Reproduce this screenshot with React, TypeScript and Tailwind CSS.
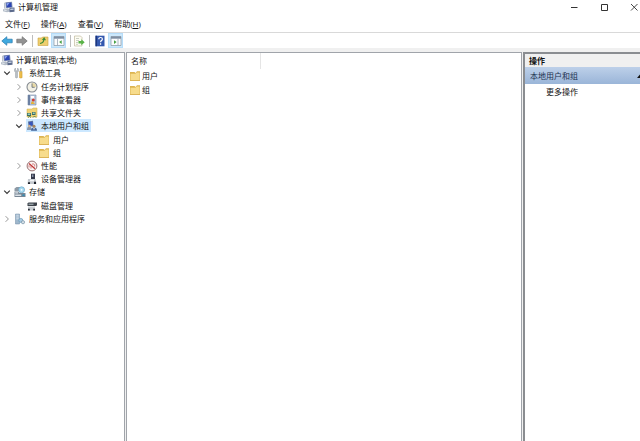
import type { ReactNode } from "react";
import clsx from "clsx";

interface TreeItem {
  label: string;
  icon: ReactNode;
  state?: "open" | "closed";
  selected?: boolean;
  children?: TreeItem[];
}

function Computer() {
  return (
    <svg className="h-3 w-3 shrink-0" viewBox="0 0 12 12">
      <path d="M1 2l1.500-.8v6.600L1 7.500z" fill="#b9c1cc" />
      <path d="M2.500 1.300L9 .8l.6 5.700-6.600.6z" fill="#8593b0" />
      <path d="M3.300 2l5-.4.400 4.300-5 .5z" fill="#2c45b4" />
      <path d="M3.500 2.200l3-.2-2.500 3z" fill="#8ea6ee" />
      <path d="M0 8.300l4.500-1 3 1.200v2L4 11.300 0 10.200z" fill="#b3bcc8" />
      <path d="M.8 8.900l2.700.6" stroke="#f3f6f9" strokeWidth=".8" />
      <path d="M6.500 6.800L11.500 6.500v4.200l-5 .6z" fill="#5c6b8c" />
      <path d="M7.300 7.700l3.300-.2v1.300l-3.300.3z" fill="#cbd6ea" />
    </svg>
  );
}

function Tools() {
  return (
    <svg className="h-3 w-3 shrink-0" viewBox="0 0 12 12">
      <path d="M1.500 1v2l1 .8 1-.8V1l1 1v2.200l-1 1v5.300q-1 1-2 0V5.200l-1-1V2z" fill="#b9bfc5" stroke="#878e95" strokeWidth=".4" />
      <path d="M6 1h1.600l.2 3.500h-2z" fill="#9ca3aa" />
      <path d="M5.500 4.500h2.600v6.200q-1.300.8-2.600 0z" fill="#edbe4b" stroke="#c08d20" strokeWidth=".4" />
    </svg>
  );
}

function Clock() {
  return (
    <svg className="h-3 w-3 shrink-0" viewBox="0 0 12 12">
      <circle cx="6" cy="6" r="5" fill="#f3f1e6" stroke="#858b91" strokeWidth="1.100" />
      <path d="M6 6V2a4 4 0 0 1 4 4z" fill="#e8d9a6" />
      <path d="M6 2.500V6.300h2.700" fill="none" stroke="#5c6670" strokeWidth=".8" />
    </svg>
  );
}

function EventLog() {
  return (
    <svg className="h-3 w-3 shrink-0" viewBox="0 0 12 12">
      <path d="M2 1h8v10H2z" fill="#bccbe0" stroke="#7486a2" strokeWidth=".6" />
      <path d="M2 1h2v10H2z" fill="#6c80a2" />
      <path d="M5 2h3v2.500H5z" fill="#fff" />
      <circle cx="7.300" cy="6" r="1.500" fill="#cf3b36" />
      <path d="M5 8.500L6.500 7 9 10H5z" fill="#e4b23a" />
    </svg>
  );
}

function SharedFolder() {
  return (
    <svg className="h-3 w-3 shrink-0" viewBox="0 0 12 12">
      <path d="M1 2h5l1-1h4v9H1z" fill="#f0d274" stroke="#d2ac49" strokeWidth=".5" />
      <path d="M1 6h4v3H1zM6 5h3.500v3H6z" fill="#3b6b62" />
      <path d="M1.700 6.500h2.500v1.500H1.700zM6.700 5.600h2v1.500h-2z" fill="#9cd2bd" />
      <path d="M2 10.500l1.500-1 1.500 1M7 10.500l1.500-1.500 1.500 1.500" fill="none" stroke="#4b7d47" strokeWidth=".9" />
    </svg>
  );
}

function Users() {
  return (
    <svg className="h-3 w-3 shrink-0" viewBox="0 0 12 12">
      <path d="M2 1.500l5-.8.500 5.500-5 .6z" fill="#62759c" />
      <path d="M2.900 2.200l3.500-.5.300 3.600-3.400.4z" fill="#3657be" />
      <path d="M1 9q0-2.500 2.300-2.500T5.700 9v1H1z" fill="#8b98ac" />
      <circle cx="3.400" cy="6" r="1.200" fill="#d7b48a" />
      <path d="M5 10.800q0-3.300 3-3.300t3 3.300z" fill="#45679c" />
      <circle cx="8" cy="6.300" r="1.500" fill="#a7865c" />
      <path d="M7.300 8h1.400L8 10z" fill="#fff" />
    </svg>
  );
}

function Folder() {
  return (
    <svg className="h-3 w-3 shrink-0" viewBox="0 0 12 12">
      <path d="M1 2h4.500l1 1L8 1.300h3v9.200H1z" fill="#dcb450" />
      <path d="M1.500 3.700h5L7.600 2.500h3v7.600H1.500z" fill="#f7dc8c" />
      <path d="M1 10h10v.8H1z" fill="#d8ab45" />
    </svg>
  );
}

function Performance() {
  return (
    <svg className="h-3 w-3 shrink-0" viewBox="0 0 12 12">
      <circle cx="6" cy="6" r="4.900" fill="#fbf5f4" stroke="#8d6263" strokeWidth=".9" />
      <path d="M3 3.500l6 5.200" stroke="#c13535" strokeWidth="1.300" />
      <path d="M3 7.500V5.200M5 8.500V6M7 5V3M8.700 6.500V4.200" stroke="#c86464" strokeWidth=".8" />
    </svg>
  );
}

function Device() {
  return (
    <svg className="h-3 w-3 shrink-0" viewBox="0 0 12 12">
      <path d="M5 .7h4v5.500H5z" fill="#35394a" />
      <path d="M5.900 1.500h1.500V4H5.900z" fill="#8892a8" />
      <path d="M2 6h7.500l1 5H1.500z" fill="#c5cad0" />
      <path d="M2 9.200h2v1.800H2zM8 8.800h2v2.200H8z" fill="#20242c" />
      <path d="M4 6.800h4v1.500H4z" fill="#f4f6f8" />
    </svg>
  );
}

function Storage() {
  return (
    <svg className="h-3 w-3 shrink-0" viewBox="0 0 12 12">
      <path d="M.5 2.500L2.500 1h4v4h-6z" fill="#8f9aa5" />
      <circle cx="7.600" cy="3.800" r="3" fill="#a9d9ef" stroke="#5c9fc4" strokeWidth=".6" />
      <circle cx="7.600" cy="3.800" r=".9" fill="#fff" />
      <path d="M.5 5.500h4l1 1.500h6v4H.5z" fill="#788694" />
      <path d="M1.200 6.200h3v1.200h-3zM1.200 8.600h6v1.400h-6z" fill="#dce3e9" />
      <path d="M8.500 8.400h2v1.600h-2z" fill="#2f8fb8" />
    </svg>
  );
}

function Disk() {
  return (
    <svg className="h-3 w-3 shrink-0" viewBox="0 0 12 12">
      <path d="M2.500 2.500H11v2.700L10 6H1.500V3.500z" fill="#3c424a" />
      <path d="M2.500 3.700h5v1h-5z" fill="#b6c4c8" />
      <path d="M2 6.500h7v4H2z" fill="#c8cdd2" />
      <path d="M2 8.700h1.800v1.800H2zM7.200 8.700H9v1.800H7.200z" fill="#292e36" />
    </svg>
  );
}

function Services() {
  return (
    <svg className="h-3 w-3 shrink-0" viewBox="0 0 12 12">
      <path d="M1.500 1h4v10h-4z" fill="#9fb7cc" stroke="#6e8aa5" strokeWidth=".5" />
      <path d="M2.300 2.200h2.400M2.300 4h2.400M2.300 5.800h2.400" stroke="#eef5fa" strokeWidth=".7" />
      <circle cx="6.800" cy="7.400" r="2" fill="#a9cce3" stroke="#6396b8" strokeWidth=".7" />
      <circle cx="9" cy="9.200" r="1.600" fill="#d5dfe6" stroke="#7894a8" strokeWidth=".7" />
    </svg>
  );
}

const tree: TreeItem[] = [
  {
    label: "系统工具",
    icon: <Tools />,
    state: "open",
    children: [
      { label: "任务计划程序", icon: <Clock />, state: "closed" },
      { label: "事件查看器", icon: <EventLog />, state: "closed" },
      { label: "共享文件夹", icon: <SharedFolder />, state: "closed" },
      {
        label: "本地用户和组",
        icon: <Users />,
        state: "open",
        selected: true,
        children: [
          { label: "用户", icon: <Folder /> },
          { label: "组", icon: <Folder /> },
        ],
      },
      { label: "性能", icon: <Performance />, state: "closed" },
      { label: "设备管理器", icon: <Device /> },
    ],
  },
  {
    label: "存储",
    icon: <Storage />,
    state: "open",
    children: [{ label: "磁盘管理", icon: <Disk /> }],
  },
  { label: "服务和应用程序", icon: <Services />, state: "closed" },
];

const menus = [
  { label: "文件", accessKey: "F" },
  { label: "操作", accessKey: "A" },
  { label: "查看", accessKey: "V" },
  { label: "帮助", accessKey: "H" },
];

function Expander({ label, open }: { label: string; open: boolean }) {
  return (
    <button type="button" aria-label={label} aria-expanded={open} className="flex h-3 w-2 items-center justify-center">
      <svg className="h-2 w-2" viewBox="0 0 8 8" fill="none">
        {open ? (
          <path d="M1.200 2.600L4 5.400l2.800-2.800" stroke="#333" strokeWidth="1.100" />
        ) : (
          <path d="M2.600 1.200L5.400 4 2.600 6.800" stroke="#8c8c8c" strokeWidth=".9" />
        )}
      </svg>
    </button>
  );
}

function TreeNode({ item }: { item: TreeItem }) {
  return (
    <li>
      <div className="flex h-[13px] items-center">
        <span className="mr-[3px] flex w-2 shrink-0">
          {item.state && <Expander label={item.label} open={item.state === "open"} />}
        </span>
        <button
          type="button"
          className={clsx("flex h-[13px] items-center gap-[3px] pr-[2px] whitespace-nowrap", item.selected && "bg-[#cce8ff]")}
        >
          {item.icon}
          {item.label}
        </button>
      </div>
      {item.children && (
        <ul className="pt-px pl-3">
          {item.children.map((child) => (
            <TreeNode key={child.label} item={child} />
          ))}
        </ul>
      )}
    </li>
  );
}

function PaneIcon({ flip }: { flip?: boolean }) {
  return (
    <svg className="h-3 w-3" viewBox="0 0 12 12">
      <path d="M1 1.500h10v9H1z" fill="#fbfcfd" stroke="#8794a1" strokeWidth=".7" />
      <path d="M1 1.500h10v2.200H1z" fill="#7e8fa2" />
      <path d={flip ? "M8 4v6.500" : "M4.500 4v6.500"} stroke="#9aa6b2" strokeWidth=".8" />
      <path d={flip ? "M4 5.300v3.600L6.600 7.100z" : "M8.700 5.300v3.600L6.100 7.100z"} fill="#46a045" />
    </svg>
  );
}

function Separator() {
  return <span className="h-3 w-px bg-[#bdbdbd]" />;
}

function Toolbar() {
  return (
    <div className="flex h-4 items-center border-t border-[#d9d9d9] pl-px">
      <button type="button" aria-label="后退" className="flex w-[15px]">
        <svg className="h-3 w-3" viewBox="0 0 12 12">
          <path d="M.8 6l5-4.300v2.500h5.400v3.600H5.800v2.500z" fill="#3fa9df" stroke="#2478ae" strokeWidth=".7" />
        </svg>
      </button>
      <button type="button" aria-label="前进" className="mr-px flex w-[15px]">
        <svg className="h-3 w-3" viewBox="0 0 12 12">
          <path d="M11.200 6l-5-4.300v2.500H.8v3.600h5.400v2.500z" fill="#929292" stroke="#6e6e6e" strokeWidth=".7" />
        </svg>
      </button>
      <Separator />
      <button type="button" aria-label="上移一级" className="mr-[2px] ml-1 flex">
        <svg className="h-3 w-3" viewBox="0 0 12 12">
          <path d="M1 3h3.500l1-1H11v8.500H1z" fill="#efcf6e" stroke="#c9a23f" strokeWidth=".6" />
          <path d="M3 8.500Q6.500 8 6.800 4.800" fill="none" stroke="#3d8b37" strokeWidth="1.200" />
          <path d="M4.900 5L7.200 2 9 5.300z" fill="#3d8b37" />
        </svg>
      </button>
      <button type="button" aria-label="显示/隐藏控制台树" aria-pressed="true" className="mr-1 flex h-[15px] w-[15px] items-center justify-center border border-[#b5dcf9] bg-[#cce8fb]">
        <PaneIcon />
      </button>
      <Separator />
      <button type="button" aria-label="导出列表" className="mr-1 ml-[2px] flex">
        <svg className="h-3 w-3" viewBox="0 0 12 12">
          <path d="M1.500 1h6l1.500 1.500V11H1.500z" fill="#fdfcf3" stroke="#b5ae8e" strokeWidth=".6" />
          <path d="M3 3.500h3M3 5.500h3M3 7.500h2M3 9.300h2" stroke="#a9b2a4" strokeWidth=".6" />
          <path d="M5.500 6h2.800V4.200L11.700 7.200 8.300 10.200V8.400H5.500z" fill="#58b247" />
        </svg>
      </button>
      <Separator />
      <button type="button" aria-label="帮助" className="mr-[2px] ml-1 flex h-3 w-3 items-center justify-center">
        <svg className="h-3 w-3" viewBox="0 0 12 12">
          <path d="M1.500.7h9v10.600h-9z" fill="#3458ae" />
          <path d="M1.500.7h1.500v10.600H1.500z" fill="#1d377d" />
          <path d="M4.800 4.200q0-1.700 1.800-1.700t1.800 1.600q0 1-1 1.500-.8.400-.8 1.600M6.600 8.300v1.400" fill="none" stroke="#fff" strokeWidth="1.200" />
        </svg>
      </button>
      <button type="button" aria-label="显示/隐藏操作窗格" aria-pressed="true" className="flex h-[15px] w-[15px] items-center justify-center border border-[#b5dcf9] bg-[#cce8fb]">
        <PaneIcon flip />
      </button>
    </div>
  );
}

export default function App() {
  return (
    <div className="flex min-h-screen flex-col overflow-hidden bg-white font-['Open_Sans','Noto_Sans_CJK_SC',sans-serif] text-[8px] leading-3 text-[#111]">
      {/* Title bar */}
      <header className="flex h-[14px] items-center pl-[3px]">
        <Computer />
        <h1 className="ml-[3px] flex-1">计算机管理</h1>
        <div className="flex h-3 gap-[18px]">
          <button type="button" aria-label="最小化" className="flex w-3 items-center justify-center">
            <svg className="h-2 w-2" viewBox="0 0 8 8"><path d="M1 4.500h6.500" stroke="#333" /></svg>
          </button>
          <button type="button" aria-label="最大化" className="flex w-3 items-center justify-center">
            <svg className="h-2 w-2" viewBox="0 0 8 8"><path d="M1.500 1.500h6v6h-6z" fill="none" stroke="#333" /></svg>
          </button>
          <button type="button" aria-label="关闭" className="flex w-3 items-center justify-center">
            <svg className="h-2 w-2" viewBox="0 0 8 8"><path d="M1 1l6.500 6.500M7.500 1L1 7.500" stroke="#333" strokeWidth=".9" /></svg>
          </button>
        </div>
      </header>

      <nav className="flex h-[18px] items-center gap-[11px] pt-[2px] pl-[5px]">
        {menus.map((m) => (
          <button key={m.accessKey} type="button" className="whitespace-nowrap">
            {m.label}(<u>{m.accessKey}</u>)
          </button>
        ))}
      </nav>

      <Toolbar />

      <main className="flex flex-1 gap-px bg-[#f0f0f0] pt-1">
        {/* Console tree */}
        <aside className="w-[125px] shrink-0 border-t border-r border-[#a0a4aa] bg-white pl-px">
          <button type="button" className="flex h-[13px] items-center gap-[3px] whitespace-nowrap">
            <Computer />
            计算机管理(本地)
          </button>
          <ul className="pl-[2px]">
            {tree.map((item) => (
              <TreeNode key={item.label} item={item} />
            ))}
          </ul>
        </aside>

        {/* Result list */}
        <section className="min-w-0 flex-1 border border-b-0 border-[#a0a4aa] bg-white">
          <table className="w-full table-fixed text-left">
            <thead>
              <tr>
                <th className="h-4 w-[133px] border-r border-[#e5e5e5] pl-1 font-normal">名称</th>
                <th aria-hidden="true" />
              </tr>
            </thead>
            <tbody>
              {["用户", "组"].map((name) => (
                <tr key={name}>
                  <td className="h-[14px] pl-[2px]">
                    <button type="button" className="flex items-center gap-px">
                      <Folder />
                      {name}
                    </button>
                  </td>
                  <td />
                </tr>
              ))}
            </tbody>
          </table>
        </section>

        {/* Actions */}
        <aside className="w-[117px] shrink-0 border-t-2 border-l-2 border-[#8a8d91] bg-white">
          <h2 className="flex h-[13px] items-center bg-[#f0f0f0] pl-1 font-bold">操作</h2>
          <button
            type="button"
            aria-expanded="true"
            className="flex h-[17px] w-full items-center justify-between overflow-hidden bg-linear-to-b from-[#bdd0e9] to-[#9ab5d8] pl-[5px] text-[#1e3350]"
          >
            本地用户和组
            <svg className="-mr-1 h-2 w-2 shrink-0" viewBox="0 0 8 8"><path d="M1 6l3.500-4L8 6z" fill="#111" /></svg>
          </button>
          <button type="button" className="flex h-4 w-full items-center pl-[21px]">更多操作</button>
        </aside>
      </main>
    </div>
  );
}
